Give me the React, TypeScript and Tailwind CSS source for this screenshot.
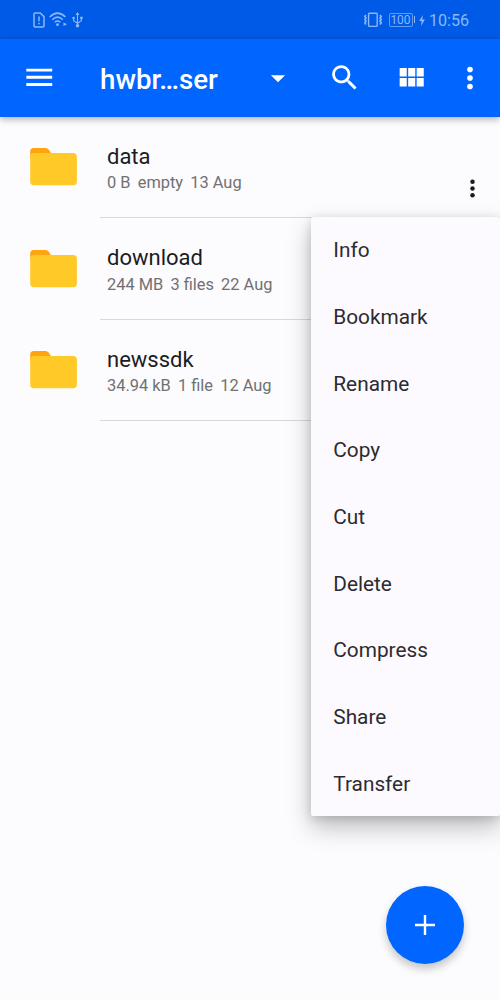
import React from 'react';

type Folder = {
  name: string;
  info: string[];
};

const folders: Folder[] = [
  { name: 'data', info: ['0 B', 'empty', '13 Aug'] },
  { name: 'download', info: ['244 MB', '3 files', '22 Aug'] },
  { name: 'newssdk', info: ['34.94 kB', '1 file', '12 Aug'] },
];

const menuItems = ['Info', 'Bookmark', 'Rename', 'Copy', 'Cut', 'Delete', 'Compress', 'Share', 'Transfer'];

const MoreIcon = ({ className }: { className?: string }) => (
  <svg viewBox="0 0 24 24" fill="currentColor" className={className}>
    <circle cx="12" cy="6" r="2" />
    <circle cx="12" cy="12" r="2" />
    <circle cx="12" cy="18" r="2" />
  </svg>
);

const FolderIcon = () => (
  <svg viewBox="0 0 48 38" className="w-12 h-[38px] shrink-0">
    <path d="M0.2 10V3.5Q0.2 0 3.7 0H15.5Q17.5 0 18.7 1.5L21.5 6V10Z" fill="#ffa30f" />
    <rect x="0.2" y="4.9" width="46.7" height="32.4" rx="3.8" fill="#ffca28" />
  </svg>
);

const StatusBar = () => (
  <div className="h-[39px] bg-[#005ae8] text-[#8ab8f8] flex items-center">
    <svg viewBox="0 0 12 16" fill="none" stroke="currentColor" strokeWidth="1.5" className="w-3 h-4 ml-[33px] shrink-0">
      <path d="M1 2.2Q1 1 2.2 1H7.2L11 4.6V13.8Q11 15 9.8 15H2.2Q1 15 1 13.8Z" />
      <path d="M6 4.5V9.2M6 10.8V12.3" />
    </svg>
    <svg viewBox="0 0 19 15" fill="none" stroke="currentColor" strokeWidth="1.5" className="w-[19px] h-[15px] ml-1 shrink-0">
      <path d="M0.7 5Q8.5 -2.8 16.4 5M3.3 7.7Q8.5 2.6 13.8 7.7M5.8 10.2Q8.5 7.8 11.3 10.2" />
      <circle cx="8.5" cy="12.7" r="1.4" fill="currentColor" stroke="none" />
      <path d="M14.5 10.5L18 12.2L14.5 14Z" fill="currentColor" stroke="none" />
    </svg>
    <svg viewBox="0 0 11 16" fill="none" stroke="currentColor" strokeWidth="1.1" className="w-[11px] h-4 ml-1 mt-px shrink-0">
      <path d="M5.5 2V14M1.6 6.5V8.8L5.5 11.3L9.4 8.8V6" />
      <path d="M5.5 0L7.4 3H3.6Z" fill="currentColor" stroke="none" />
      <circle cx="1.6" cy="6" r="1.3" fill="currentColor" stroke="none" />
      <rect x="8.2" y="4.7" width="2.4" height="2.4" fill="currentColor" stroke="none" />
      <circle cx="5.5" cy="13.8" r="1.8" fill="currentColor" stroke="none" />
    </svg>
    <svg viewBox="0 0 19 16" fill="none" stroke="currentColor" strokeWidth="1.4" className="w-[19px] h-4 ml-auto shrink-0">
      <rect x="4.6" y="1.2" width="8.6" height="13.2" rx="0.8" />
      <path d="M1.8 3L0.8 4.5L2 6L0.8 7.5L2 9L0.8 10.5L1.8 12.5M16 3L17.2 4.5L16 6L17.2 7.5L16 9L17.2 10.5L16 12.5" strokeWidth="1.7" />
    </svg>
    <div className="w-6 h-[14px] ml-[6px] border border-current/70 rounded-[2px] flex items-center justify-center text-[12px] leading-none shrink-0">
      <span className="mt-px">100</span>
    </div>
    <div className="w-[1.5px] h-[7px] ml-[1px] bg-current shrink-0" />
    <svg viewBox="0 0 6 11" fill="currentColor" className="w-[6px] h-[11px] ml-[4px] mt-px shrink-0">
      <path d="M3.8 0L0.2 6H2.6L2 11L5.9 4.6H3.3Z" />
    </svg>
    <span className="w-[75px] pl-[4px] text-[16.1px] leading-none mt-[3px]">10:56</span>
  </div>
);

const Toolbar = () => (
  <div className="relative h-[78px] bg-[#0066ff] text-white flex items-center shadow-[0_2px_7px_rgba(0,0,0,0.32)]">
    <svg viewBox="0 0 24 24" fill="currentColor" className="w-[34.5px] h-[34.5px] ml-[21.5px] -mt-[2px] shrink-0">
      <path d="M3 18h18v-2H3v2zm0-5h18v-2H3v2zm0-7v2h18V6H3z" />
    </svg>
    <h1 className="ml-[44px] w-[161px] text-[27.7px] leading-8 font-medium mt-[4px]">hwbr…ser</h1>
    <svg viewBox="0 0 24 24" fill="currentColor" className="w-[34px] h-[34px] -mt-px shrink-0">
      <path d="M7 10l5 5 5-5z" />
    </svg>
    <svg viewBox="0 0 24 24" fill="currentColor" className="w-[33.5px] h-[33.5px] ml-[32.5px] -mt-px shrink-0">
      <path d="M15.5 14h-.79l-.28-.27C15.41 12.59 16 11.11 16 9.5 16 5.91 13.09 3 9.5 3S3 5.91 3 9.5 5.91 16 9.5 16c1.61 0 3.09-.59 4.23-1.57l.27.28v.79l5 4.99L20.49 19l-4.99-5zm-6 0C7.01 14 5 11.99 5 9.5S7.01 5 9.5 5 14 7.01 14 9.5 11.99 14 9.5 14z" />
    </svg>
    <svg viewBox="0 0 24 24" fill="currentColor" className="w-[34px] h-[34px] ml-[33px] shrink-0">
      <path d="M4 11h5V5H4v6zm0 7h5v-6H4v6zm6 0h5v-6h-5v6zm6 0h5v-6h-5v6zm-6-7h5V5h-5v6zm6-6v6h5V5h-5z" />
    </svg>
    <MoreIcon className="w-[34px] h-[34px] ml-[24.5px] -mt-px shrink-0" />
  </div>
);

const FolderRow = ({ name, info }: Folder) => (
  <div className="h-[101.3px] flex pl-[30px]">
    <div className="pt-[31.3px]">
      <FolderIcon />
    </div>
    <div className="ml-[22px] flex-1 flex border-b border-[#d8d8da]">
      <div className="flex-1 pl-[7px] pt-[26px]">
        <div className="text-[22px] leading-[28px] text-[#1c1b1f]">{name}</div>
        <div className="flex gap-[7.2px] pt-[0.4px] text-[16.4px] leading-[24px] text-[#717173]">
          {info.map(part => (
            <span key={part}>{part}</span>
          ))}
        </div>
      </div>
      <MoreIcon className="w-[27px] h-[27px] mt-[58.4px] mr-[14.5px] text-[#1c1b1f]" />
    </div>
  </div>
);

const ContextMenu = () => (
  <div className="absolute left-[311px] top-[216.5px] w-[189px] bg-[#fcfafe] rounded-[2px] shadow-[0_11px_24px_rgba(0,0,0,0.26),0_2px_10px_rgba(0,0,0,0.14)]">
    {menuItems.map(item => (
      <div key={item} className="h-[66.65px] pl-[22.3px] pt-[2.5px] flex items-center text-[20.8px] text-[#2c2b30]">
        {item}
      </div>
    ))}
  </div>
);

const App = () => {
  return (
    <div className="relative w-[500px] h-[1000px] overflow-hidden bg-[#fcfbfd] font-[Roboto,sans-serif]">
      <StatusBar />
      <Toolbar />
      <div>
        {folders.map(folder => (
          <FolderRow key={folder.name} {...folder} />
        ))}
      </div>
      <ContextMenu />
      <button className="absolute left-[386px] top-[886px] w-[78px] h-[78px] rounded-full bg-[#0066ff] flex items-center justify-center shadow-[0_5px_9px_rgba(0,0,0,0.22)]">
        <svg viewBox="0 0 20 20" stroke="white" strokeWidth="2.4" className="w-5 h-5">
          <path d="M10 0V20M0 10H20" />
        </svg>
      </button>
    </div>
  );
};

export default App;
